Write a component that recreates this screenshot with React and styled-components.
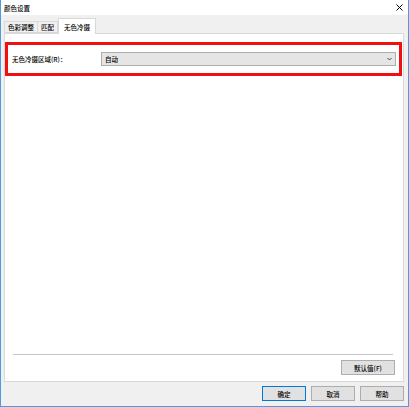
import React from 'react'
import styled, { createGlobalStyle } from 'styled-components'

const Global = createGlobalStyle`
    html, body {
        margin: 0;
        padding: 0;
        background: #fff;
    }
    * {
        box-sizing: border-box;
    }
`

const Window = styled.div`
    display: flex;
    flex-direction: column;
    width: 409px;
    height: 407px;
    border: 1px solid #4f9be0;
    border-top: none;
    font-family: "Noto Sans CJK SC", "Liberation Sans", sans-serif;
    font-size: 6.5px;
    font-weight: 500;
    color: #000;
    background: #f0f0f0;
`

const TitleBar = styled.div`
    display: flex;
    align-items: center;
    justify-content: space-between;
    height: 15px;
    padding: 0 5px 0 3px;
    background: #fff;
`

const Body = styled.div`
    display: flex;
    flex-direction: column;
    flex: 1;
    padding: 3px 4px 5px 3px;
`

const TabStrip = styled.div`
    display: flex;
    align-items: flex-end;
    height: 15px;
    position: relative;
    z-index: 1;
`

const Tab = styled.div`
    display: flex;
    align-items: center;
    justify-content: center;
    height: ${p => (p.$active ? '16px' : '12px')};
    margin: ${p => (p.$active ? '0 -2px -1px -2px' : '0')};
    padding: 0 ${p => (p.$active ? '5px' : '3px')};
    border: 1px solid #d9d9d9;
    border-bottom: ${p => (p.$active ? 'none' : '1px solid #d9d9d9')};
    border-left: ${p => (p.$first || p.$active ? '1px solid #d9d9d9' : 'none')};
    background: ${p => (p.$active ? '#fff' : '#f0f0f0')};
    white-space: nowrap;
`

const Spacer = styled.div`
    width: 2px;
`

const Panel = styled.div`
    display: flex;
    flex-direction: column;
    flex: 1;
    background: #fff;
    border: 1px solid #d9d9d9;
    padding: 8px 1px 6px 0;
`

const Group = styled.div`
    display: flex;
    align-items: center;
    height: 34px;
    border: 3px solid #f01010;
    padding: 0 3px 0 4px;
`

const Label = styled.span`
    width: 89px;
    white-space: nowrap;
`

const Select = styled.div`
    display: flex;
    align-items: center;
    justify-content: space-between;
    flex: 1;
    height: 14px;
    padding: 0 3px;
    background: #e5e5e5;
    border: 1px solid #adadad;
`

const Fill = styled.div`
    flex: 1;
`

const Rule = styled.div`
    height: 1px;
    margin: 0 9px 0 8px;
    background: #c4c4c4;
`

const Row = styled.div`
    display: flex;
    justify-content: flex-end;
    gap: 5px;
    padding-right: ${p => p.$pad || 0}px;
    margin-top: ${p => p.$top || 0}px;
`

const Button = styled.div`
    display: flex;
    align-items: center;
    justify-content: center;
    width: ${p => p.$w || 44}px;
    height: 15px;
    background: #e1e1e1;
    border: 1px solid ${p => (p.$primary ? '#0078d7' : '#adadad')};
    white-space: nowrap;
`

const Close = () => (
    <svg width="7" height="7" viewBox="0 0 7 7">
        <path d="M0.5 0.5 L6.5 6.5 M6.5 0.5 L0.5 6.5" stroke="#000" strokeWidth="1" />
    </svg>
)

const Chevron = () => (
    <svg width="5" height="4" viewBox="0 0 5 4">
        <path d="M0.5 1 L2.5 3 L4.5 1" stroke="#333" strokeWidth="0.9" fill="none" />
    </svg>
)

function App() {
    return (
        <>
            <Global />
            <Window>
                <TitleBar>
                    <span>颜色设置</span>
                    <Close />
                </TitleBar>
                <Body>
                    <TabStrip>
                        <Tab $first>色彩调整</Tab>
                        <Tab>匹配</Tab>
                        <Spacer />
                        <Tab $active>无色冷摄</Tab>
                    </TabStrip>
                    <Panel>
                        <Group>
                            <Label>无色冷摄区域(R)：</Label>
                            <Select>
                                <span>自动</span>
                                <Chevron />
                            </Select>
                        </Group>
                        <Fill />
                        <Rule />
                        <Row $pad={7} $top={5}>
                            <Button $w={54}>默认值(F)</Button>
                        </Row>
                    </Panel>
                    <Row $top={4}>
                        <Button $primary>确定</Button>
                        <Button>取消</Button>
                        <Button>帮助</Button>
                    </Row>
                </Body>
            </Window>
        </>
    )
}

export default App
